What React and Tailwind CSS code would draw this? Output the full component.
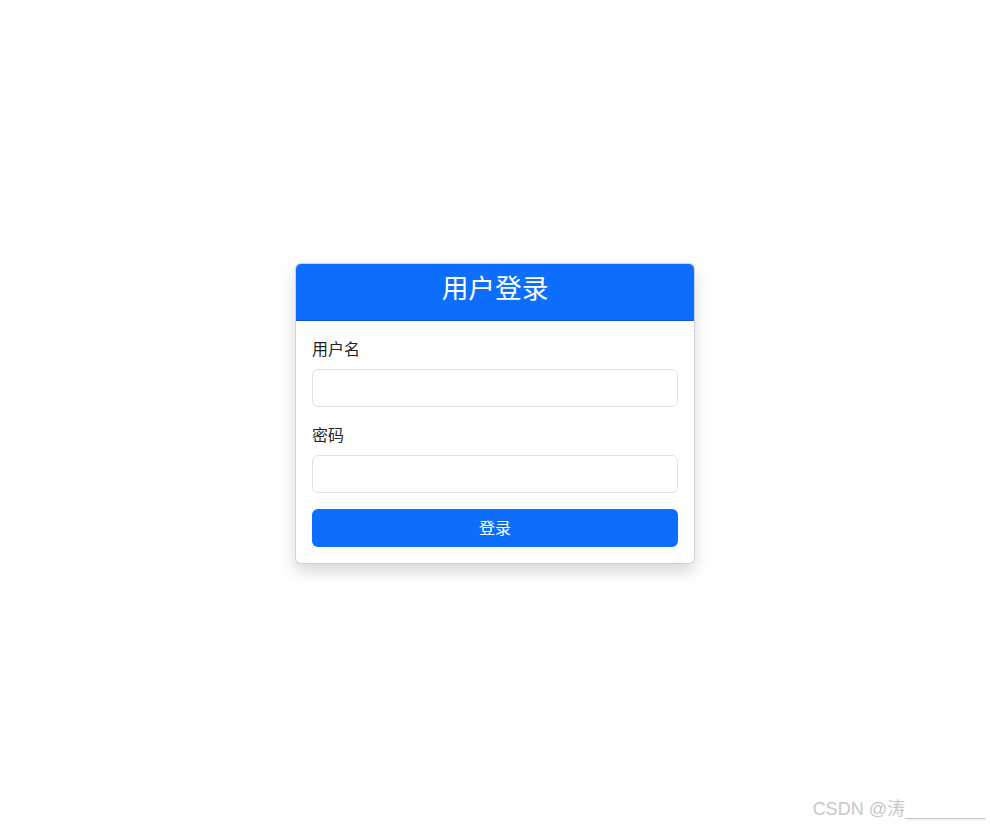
// Login card, centered on a white page
import React, { useState } from 'react';

const FONT = { fontFamily: '"Liberation Sans", "Noto Sans CJK SC", sans-serif' };

export default function App() {
  const [username, setUsername] = useState('');
  const [password, setPassword] = useState('');

  return (
    <div className="relative flex min-h-[827px] items-center justify-center bg-white text-[#212529]" style={FONT}>
      <div className="w-[400px] overflow-hidden rounded-[6px] border border-black/[0.175] bg-white shadow-[0_8px_16px_rgba(0,0,0,0.15)]">
        {/* header */}
        <div className="border-b border-black/[0.175] bg-[#0d6efd] px-4 pt-[9px] pb-[15px] text-center">
          <h3 className="text-[26.7px] leading-[32px] font-normal text-white">用户登录</h3>
        </div>

        {/* form */}
        <form className="p-4" onSubmit={(e) => e.preventDefault()}>
          <div className="mb-4">
            <label className="mb-[7px] block pt-px text-base leading-6">用户名</label>
            <input
              value={username}
              onChange={(e) => setUsername(e.target.value)}
              className="block h-[38px] w-full rounded-[6px] border border-[#dee2e6] bg-white px-3 text-base outline-none"
            />
          </div>
          <div className="mb-4">
            <label className="mb-[7px] block pt-px text-base leading-6">密码</label>
            <input
              type="password"
              value={password}
              onChange={(e) => setPassword(e.target.value)}
              className="block h-[38px] w-full rounded-[6px] border border-[#dee2e6] bg-white px-3 text-base outline-none"
            />
          </div>
          <button
            type="submit"
            className="block h-[38px] w-full rounded-[6px] bg-[#0d6efd] pt-px text-base text-white"
          >
            登录
          </button>
        </form>
      </div>

      {/* watermark */}
      <div className="absolute right-[5px] bottom-[4px] text-[18px] text-[#c8c8c8]">CSDN @涛________</div>
    </div>
  );
}
